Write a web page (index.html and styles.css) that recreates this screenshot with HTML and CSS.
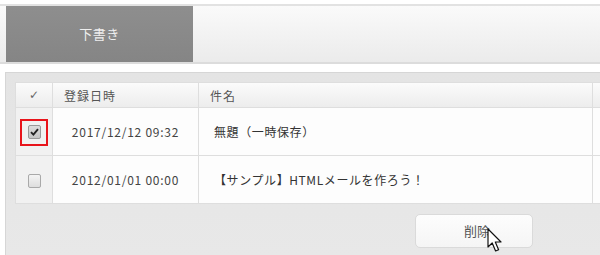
FILE: index.html
```html
<!DOCTYPE html>
<html lang="ja">
<head>
    <meta charset="UTF-8">
    <title>下書き</title>
    <link rel="stylesheet" href="styles.css">
</head>
<body>
    <div class="tabbar">
        <div class="tab">下書き</div>
    </div>

    <div class="panel">
        <table class="draft-table">
            <colgroup>
                <col class="c-check">
                <col class="c-date">
                <col class="c-title">
                <col class="c-rest">
            </colgroup>
            <thead>
                <tr>
                    <th class="check-head">✓</th>
                    <th>登録日時</th>
                    <th>件名</th>
                    <th></th>
                </tr>
            </thead>
            <tbody>
                <tr>
                    <td class="check-cell">
                        <span class="highlight"><span class="checkbox checked">
                            <svg width="9" height="8" viewBox="0 0 9 8"><path d="M1 4.2 L3.4 6.6 L8 1.2" fill="none" stroke="#222" stroke-width="1.9"/></svg>
                        </span></span>
                    </td>
                    <td class="date">2017/12/12 09:32</td>
                    <td class="title">無題（一時保存）</td>
                    <td></td>
                </tr>
                <tr>
                    <td class="check-cell"><span class="checkbox"></span></td>
                    <td class="date">2012/01/01 00:00</td>
                    <td class="title">【サンプル】HTMLメールを作ろう！</td>
                    <td></td>
                </tr>
            </tbody>
        </table>

        <div class="actions">
            <button class="delete-btn">削除
                <svg class="cursor" width="16" height="25" viewBox="0 0 16 25">
                    <path d="M1 1 L1 19 L5.2 15 L8.6 23 L11.6 21.7 L8.3 14 L14 14 Z" fill="#fff" stroke="#111" stroke-width="1.2" stroke-linejoin="round"/>
                </svg>
            </button>
        </div>
    </div>
</body>
</html>
```

FILE: styles.css
```css
body {
    margin: 0;
    width: 600px;
    height: 255px;
    overflow: hidden;
    background: #fff;
    font-family: "Noto Sans CJK JP", "Noto Sans", sans-serif;
    font-size: 12px;
    color: #333;
}
.tabbar {
    margin-top: 4px;
    height: 56px;
    border-top: 2px solid #e2e2e2;
    border-bottom: 2px solid #dcdcdc;
    background: linear-gradient(#fafafa, #ebebeb);
    padding-left: 6px;
    display: flex;
}
.tab {
    width: 187px;
    background: linear-gradient(#8e8e8e, #858585);
    color: #eee;
    font-size: 13px;
    letter-spacing: 0.5px;
    display: flex;
    align-items: center;
    justify-content: center;
    padding-bottom: 2px;
    box-sizing: border-box;
}
.panel {
    margin: 8px 0 0 5px;
    border: 1px solid #d6d6d6;
    border-right: none;
    border-bottom: none;
    background: linear-gradient(#e4e4e4, #e8e8e8);
    padding: 9px 0 0 9px;
    height: 174px;
}
.draft-table {
    border-collapse: collapse;
    table-layout: fixed;
    width: 600px;
    background: #fdfdfd;
}
.c-check { width: 37px; }
.c-date { width: 146px; }
.c-title { width: 394px; }
.draft-table th,
.draft-table td {
    border: 1px solid #dedede;
    padding: 0;
}
.draft-table thead tr {
    height: 25px;
    background: linear-gradient(#fbfbfb, #ececec);
}
.draft-table th {
    font-weight: normal;
    text-align: left;
    color: #555;
    letter-spacing: 1px;
    padding-left: 11px;
}
.draft-table th.check-head {
    text-align: center;
    padding-left: 0;
    letter-spacing: 0;
    font-family: "DejaVu Sans", sans-serif;
    font-size: 12px;
    color: #666;
}
.draft-table tbody tr {
    height: 48px;
}
.check-cell {
    background: #f1f1f1;
    text-align: center;
}
.date {
    text-align: center;
    letter-spacing: 0.75px;
    color: #444;
}
.title {
    padding-left: 15px !important;
    letter-spacing: 0.6px;
    color: #333;
}
.checkbox {
    display: inline-flex;
    align-items: center;
    justify-content: center;
    width: 11px;
    height: 12px;
    border: 1px solid #a9a9a9;
    border-radius: 2px;
    background: linear-gradient(#f4f4f4, #dedede);
    vertical-align: middle;
}
.checkbox.checked {
    background: linear-gradient(#dcdcdc, #c4c4c4);
    border-color: #999;
}
.highlight {
    display: inline-flex;
    align-items: center;
    justify-content: center;
    width: 24px;
    height: 23px;
    border: 2px solid #e8141b;
    margin-top: 1px;
}
.actions {
    padding: 10px 0 0 400px;
}
.delete-btn {
    position: relative;
    width: 118px;
    height: 34px;
    border: 1px solid #dadada;
    border-radius: 5px;
    background: linear-gradient(#fdfdfd, #f5f5f5);
    font-family: "Noto Sans CJK JP", sans-serif;
    font-size: 13px;
    color: #555;
    padding: 0 0 2px 6px;
}
.cursor {
    position: absolute;
    left: 71px;
    top: 13px;
}
```
